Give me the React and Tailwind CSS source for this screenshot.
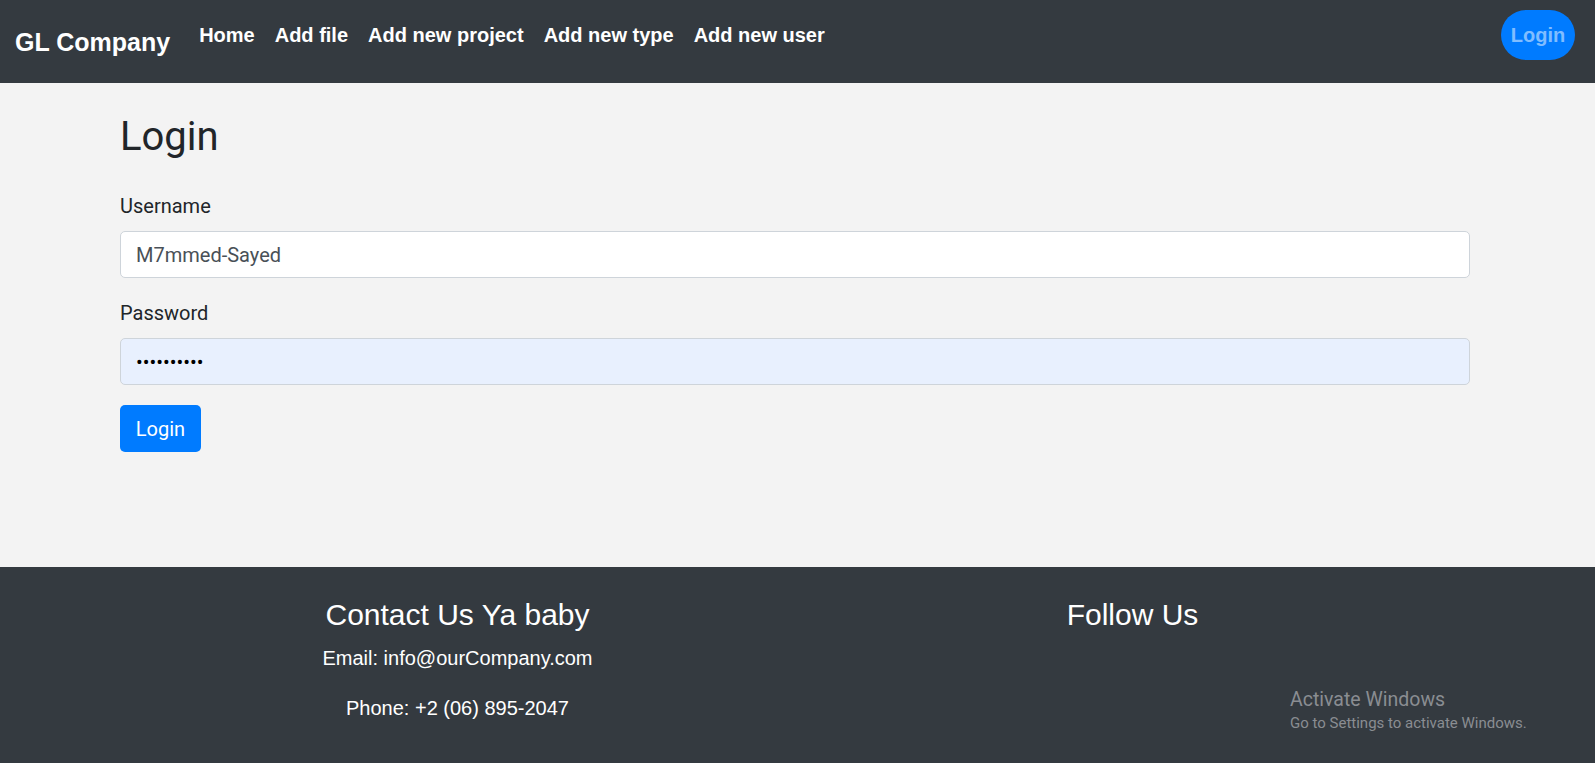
// App.jsx
// Login page: dark navbar, login form, dark footer with contact info

const navLinks = ['Home', 'Add file', 'Add new project', 'Add new type', 'Add new user']

const arial = { fontFamily: '"Liberation Sans", Arial, sans-serif' }

export default function App() {
  return (
    <div className="relative min-h-screen bg-[#f3f3f3] font-['Roboto',sans-serif] text-[#212529]">

      {/* Header */}
      <nav className="flex h-[83px] items-center bg-[#343a40] pl-[15px] pr-[20px] font-['Liberation_Sans',Arial,sans-serif]">
        <a className="text-[25px] font-bold leading-[30px] text-white">GL Company</a>

        <ul className="ml-[29px] flex gap-[20px] pb-[13px]">
          {navLinks.map((l) => (
            <li key={l} className="text-[20px] font-bold leading-[30px] text-white">
              {l}
            </li>
          ))}
        </ul>

        <div className="ml-auto pb-[13px]">
          <button className="h-[50px] w-[74px] rounded-full bg-[#007bff] text-[20px] font-bold text-[#80bdff]">
            Login
          </button>
        </div>
      </nav>

      {/* Login form */}
      <main className="pt-[30px] pb-[115px]">
        <div className="ml-[120px] w-[1350px]">
          <h1 className="mb-[30px] text-[40px] font-normal leading-[48px]">Login</h1>

          <div className="mb-[20px]">
            <label className="mb-[10px] block text-[20px] leading-[30px]">Username</label>
            <input
              type="text"
              defaultValue="M7mmed-Sayed"
              className="block h-[47px] w-full rounded-[5px] border border-[#ced4da] bg-white px-[15px] text-[20px] text-[#495057] outline-none"
            />
          </div>

          <div className="mb-[20px]">
            <label className="mb-[10px] block text-[20px] leading-[30px]">Password</label>
            <input
              type="password"
              defaultValue="1234567890"
              className="block h-[47px] w-full rounded-[5px] border border-[#ced4da] bg-[#e8f0fe] px-[15px] text-[20px] text-black outline-none"
            />
          </div>

          <button className="h-[47px] w-[81px] rounded-[5px] bg-[#007bff] text-[20px] text-white">
            Login
          </button>
        </div>
      </main>

      {/* Footer */}
      <footer className="bg-[#343a40] pt-[30px] pb-[30px] text-white" style={arial}>
        <div className="ml-[120px] grid w-[1350px] grid-cols-2 text-center">
          <div>
            <h3 className="mb-[10px] text-[30px] leading-[36px]">Contact Us Ya baby</h3>
            <p className="mb-[20px] text-[20px] leading-[30px]">Email: info@ourCompany.com</p>
            <p className="mb-[20px] text-[20px] leading-[30px]">Phone: +2 (06) 895-2047</p>
          </div>
          <div>
            <h3 className="mb-[10px] text-[30px] leading-[36px]">Follow Us</h3>
          </div>
        </div>
      </footer>

      {/* Windows watermark */}
      <div className="pointer-events-none absolute left-[1290px] top-[688px] text-[#8a8d92]">
        <p className="text-[19.5px] leading-[24px]">Activate Windows</p>
        <p className="mt-[1px] text-[15px] leading-[20px]">Go to Settings to activate Windows.</p>
      </div>
    </div>
  )
}
